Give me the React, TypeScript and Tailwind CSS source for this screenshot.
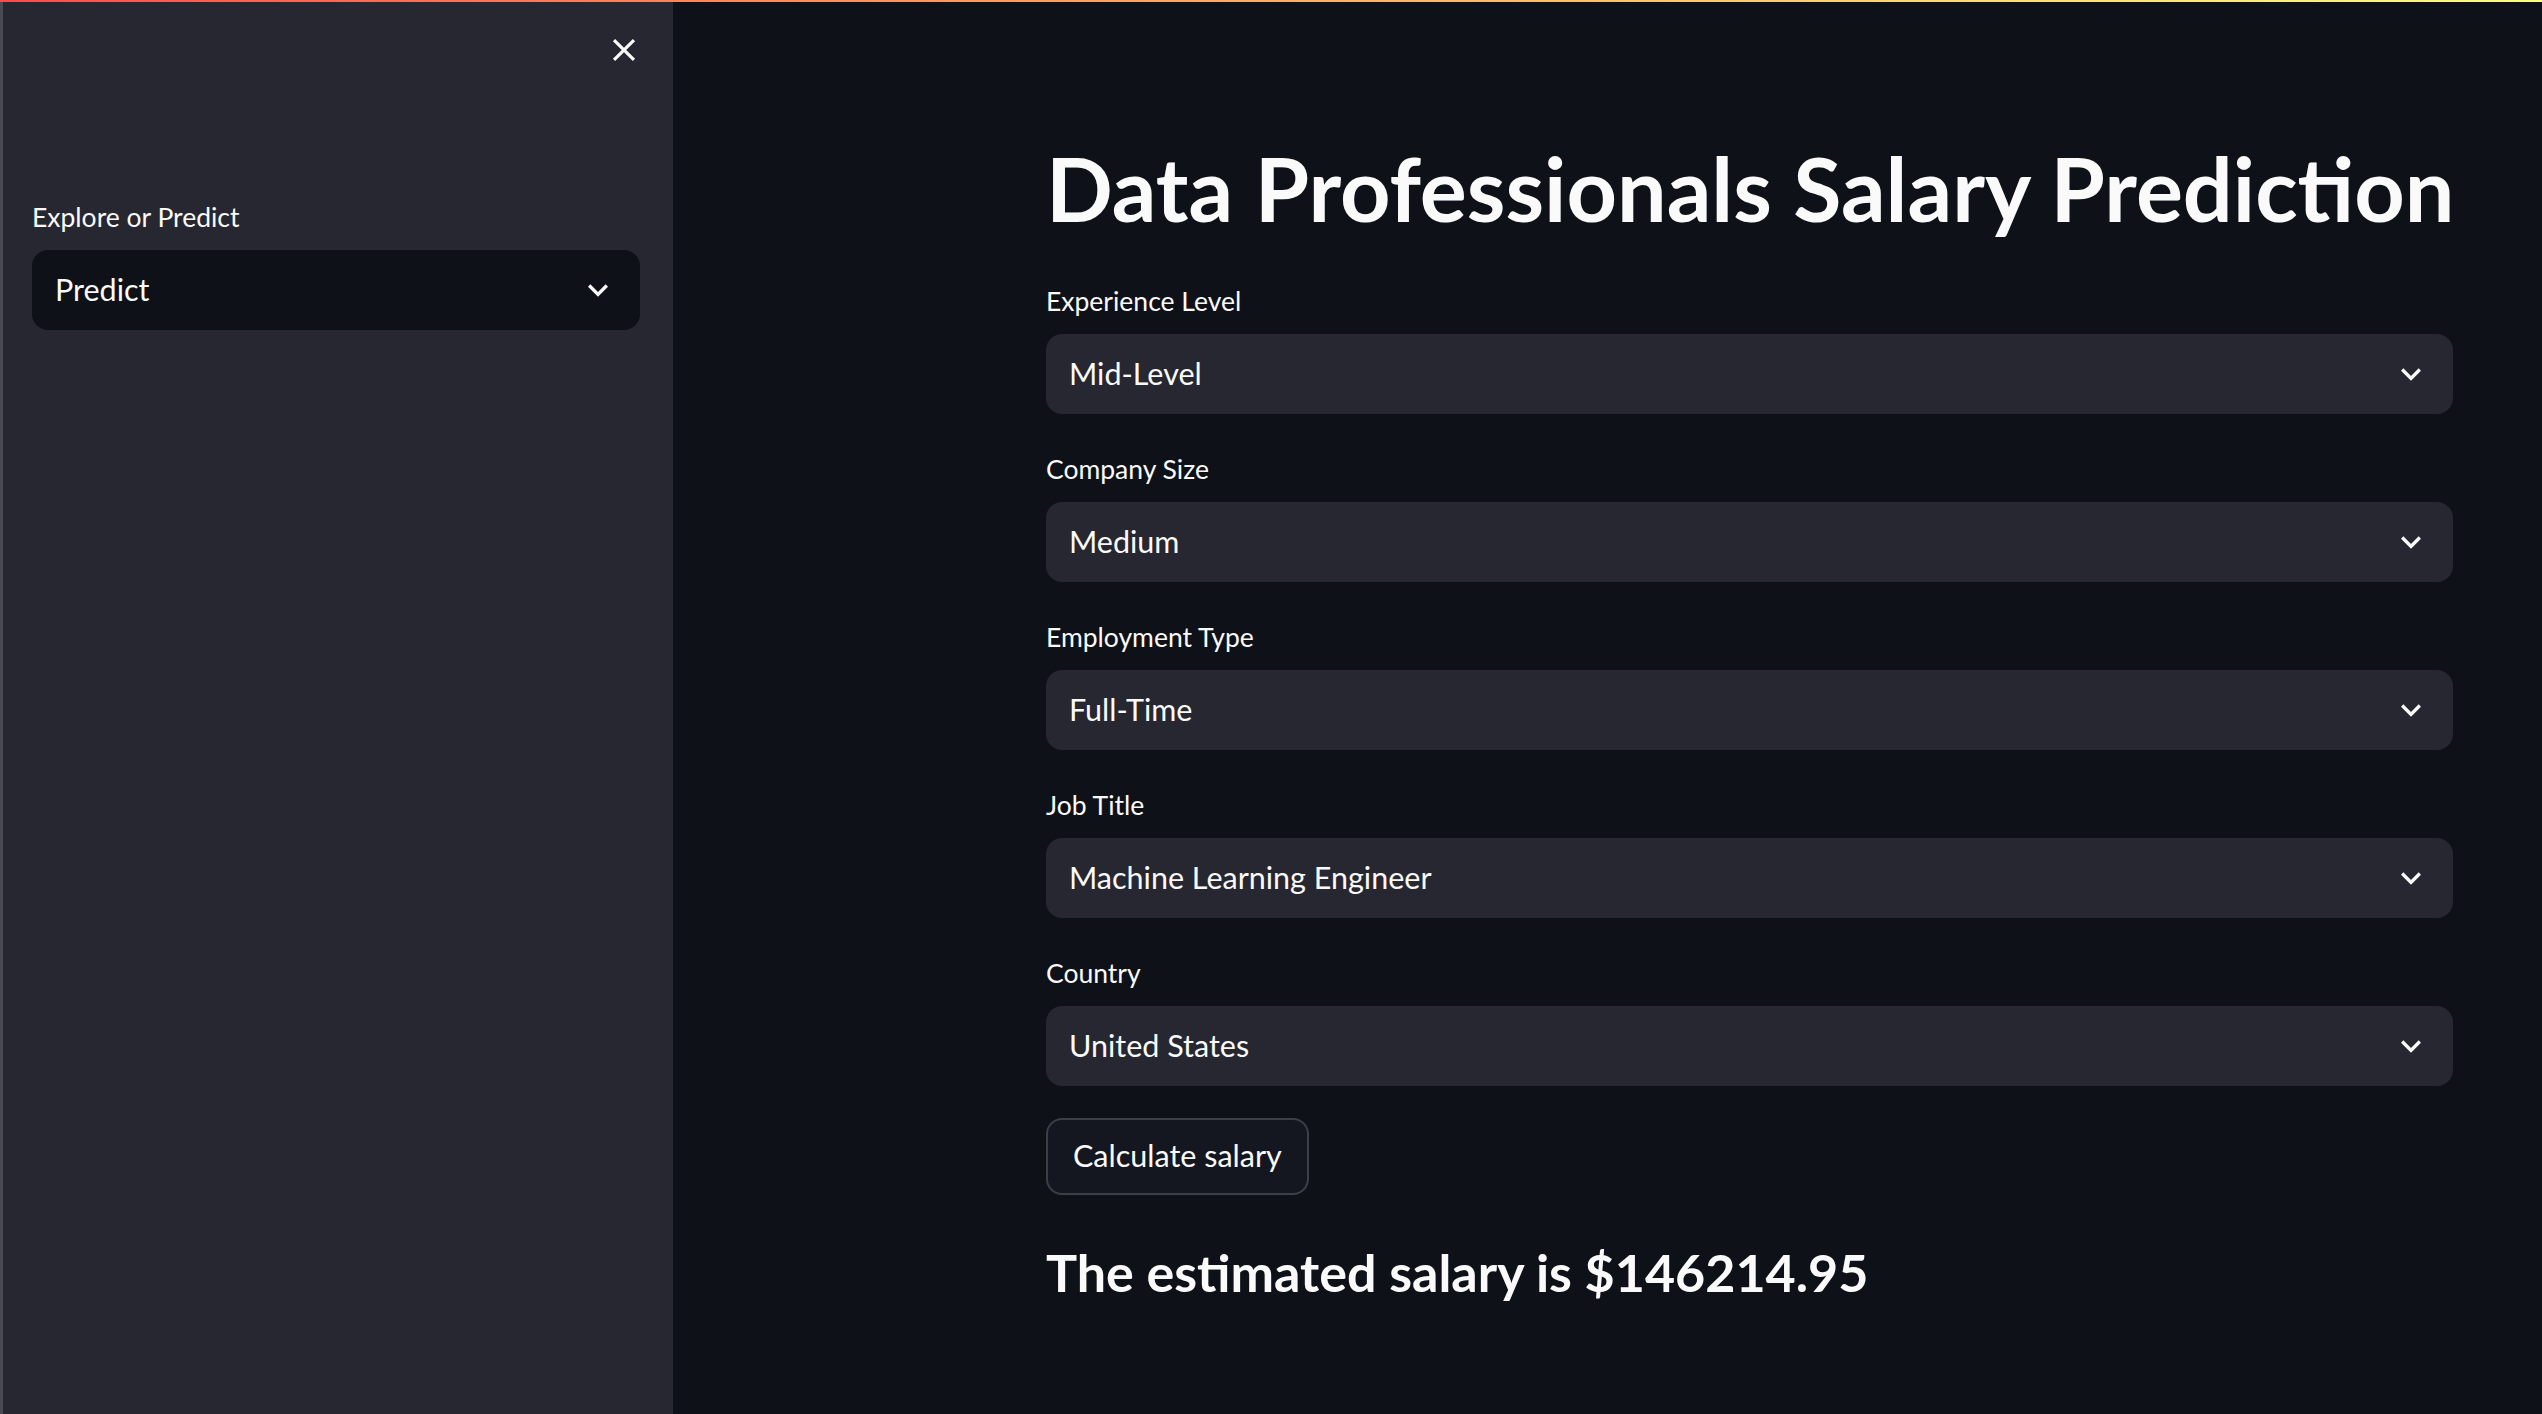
import React from 'react';

const fieldFont = "font-['Lato','Noto_Sans',sans-serif]";

const Chevron = () => (
  <svg className="w-[40px] h-[40px] shrink-0" viewBox="0 0 24 24" fill="#fafafa">
    <path d="M16.59 8.59 12 13.17 7.41 8.59 6 10l6 6 6-6z" />
  </svg>
);

const CloseIcon = () => (
  <svg className="w-[38px] h-[38px]" viewBox="0 0 24 24" fill="#fafafa">
    <path d="M19 6.41 17.59 5 12 10.59 6.41 5 5 6.41 10.59 12 5 17.59 6.41 19 12 13.41 17.59 19 19 17.59 13.41 12z" />
  </svg>
);

interface SelectProps {
  label: string;
  value: string;
  dark?: boolean;
}

const SelectBox = ({ label, value, dark }: SelectProps) => (
  <div className="flex flex-col">
    <div className="h-[48px] flex items-center text-[26.5px] text-[#fafafa]">{label}</div>
    <div
      className={`mt-[8px] h-[80px] rounded-[16px] flex items-center justify-between pl-[23px] pr-[22px] text-[30.5px] text-[#fafafa] ${
        dark ? 'bg-[#0e1117]' : 'bg-[#262730]'
      }`}
    >
      <span>{value}</span>
      <Chevron />
    </div>
  </div>
);

const fields = [
  { label: 'Experience Level', value: 'Mid-Level' },
  { label: 'Company Size', value: 'Medium' },
  { label: 'Employment Type', value: 'Full-Time' },
  { label: 'Job Title', value: 'Machine Learning Engineer' },
  { label: 'Country', value: 'United States' },
];

export default function App() {
  return (
    <div className={`h-[1414px] w-full flex flex-col bg-[#0e1117] overflow-hidden ${fieldFont}`}>
      <div className="h-[2px] w-full bg-gradient-to-r from-[#ff4b4b] to-[#fffd80]" />
      <div className="flex flex-1">
        {/* sidebar */}
        <aside className="w-[673px] shrink-0 bg-[#262730] border-l-[3px] border-[#4a4b52] flex flex-col">
          <div className="flex justify-end pr-[30px] pt-[29px]">
            <CloseIcon />
          </div>
          <div className="mt-[125px] pl-[29px] pr-[33px]">
            <SelectBox label="Explore or Predict" value="Predict" dark />
          </div>
        </aside>

        {/* main */}
        <main className="flex-1 pl-[373px]">
          <div className="w-[1407px] flex flex-col">
            <h1 className="mt-[134px] text-[88px] leading-[1.2] font-bold text-[#fafafa] whitespace-nowrap tracking-normal">
              Data Professionals Salary Prediction
            </h1>
            <div className="mt-[36px] flex flex-col gap-[32px]">
              {fields.map((f) => (
                <SelectBox key={f.label} label={f.label} value={f.value} />
              ))}
            </div>
            <div className="mt-[32px]">
              <button
                type="button"
                className="h-[77px] px-[25px] rounded-[16px] border-2 border-[#3d3f46] bg-[#141720] text-[30.5px] text-[#fafafa]"
              >
                Calculate salary
              </button>
            </div>
            <h3 className="mt-[46px] text-[52px] leading-[1.2] font-bold text-[#fafafa]">
              The estimated salary is $146214.95
            </h3>
          </div>
        </main>
      </div>
    </div>
  );
}
